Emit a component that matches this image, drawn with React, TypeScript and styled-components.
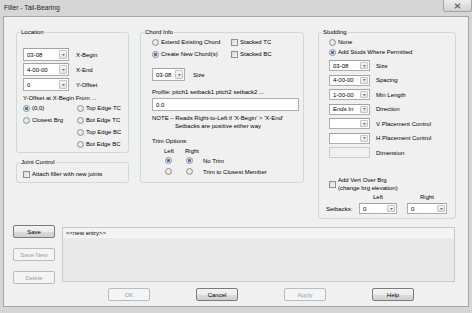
import React from "react";
import styled, { createGlobalStyle } from "styled-components";

const GlobalStyle = createGlobalStyle`
  html, body {
    margin: 0;
    padding: 0;
  }
  body {
    font-family: "Liberation Sans", Arial, sans-serif;
    font-size: 6px;
    color: #000;
    background: #d6d6d6;
  }
`;

const Window = styled.div`
  width: 472px;
  height: 313px;
  box-sizing: border-box;
  display: flex;
  flex-direction: column;
  padding: 0 3px 6px;
  background: #d6d6d6;
  overflow: hidden;
`;

const TitleBar = styled.div`
  height: 16px;
  flex-shrink: 0;
  display: flex;
  justify-content: space-between;
  align-items: flex-start;
`;

const Title = styled.span`
  margin: 4px 0 0 1px;
  font-size: 6.7px;
  line-height: 8px;
  color: #1e1e1e;
`;

const CloseButton = styled.div`
  width: 29px;
  height: 12px;
  margin-right: -3px;
  box-sizing: border-box;
  border: 1px solid #a3a3a3;
  border-top: none;
  border-radius: 0 0 3px 3px;
  background: linear-gradient(#ededed, #d3d3d3);
  display: flex;
  align-items: center;
  justify-content: center;
`;

const Client = styled.div`
  flex: 1;
  border: 1px solid #a6a6a6;
  background: #f0f0f0;
  padding: 15px 0 0 12px;
`;

const TopRow = styled.div`
  display: flex;
  align-items: flex-start;
`;

const LeftColumn = styled.div`
  display: flex;
  flex-direction: column;
  gap: 9px;
  width: 113px;
  flex-shrink: 0;
`;

const GroupFrame = styled.div<{ $w: number; $h: number; $pl: number; $ml: number }>`
  width: ${(p) => p.$w}px;
  height: ${(p) => p.$h}px;
  margin-left: ${(p) => p.$ml}px;
  flex-shrink: 0;
  box-sizing: border-box;
  border: 1px solid #d2d7da;
  border-radius: 3px;
  padding-left: ${(p) => p.$pl}px;
  display: flex;
  flex-direction: column;
  align-items: flex-start;
`;

const Caption = styled.div<{ $shift: number }>`
  margin: -5px 0 0 ${(p) => p.$shift}px;
  padding: 0 1px;
  height: 8px;
  line-height: 8px;
  background: #f0f0f0;
  white-space: nowrap;
`;

const FieldRow = styled.div<{ $mt?: number }>`
  display: flex;
  align-items: center;
  margin-top: ${(p) => p.$mt ?? 0}px;
`;

const FieldLabel = styled.span<{ $ml: number }>`
  margin-left: ${(p) => p.$ml}px;
  line-height: 8px;
  white-space: nowrap;
`;

const Text = styled.div<{ $mt?: number; $lh?: number; $indent?: number }>`
  margin-top: ${(p) => p.$mt ?? 0}px;
  padding-left: ${(p) => p.$indent ?? 0}px;
  line-height: ${(p) => p.$lh ?? 8}px;
  white-space: nowrap;
`;

const OptionGrid = styled.div<{ $cols: string; $row: number; $mt?: number }>`
  display: grid;
  grid-template-columns: ${(p) => p.$cols};
  grid-auto-rows: ${(p) => p.$row}px;
  align-items: center;
  margin-top: ${(p) => p.$mt ?? 0}px;
`;

const Option = styled.div`
  display: flex;
  align-items: center;
  gap: 2px;
  white-space: nowrap;
  line-height: 8px;
`;

const Radio = styled.span<{ $checked?: boolean }>`
  display: inline-block;
  width: 7px;
  height: 7px;
  flex-shrink: 0;
  box-sizing: border-box;
  border-radius: 50%;
  border: 1px solid #8e9092;
  background: ${(p) =>
    p.$checked
      ? "radial-gradient(circle, #2f5f92 0, #4d7cae 1.3px, #e4e4e4 1.9px, #f4f4f4 3px)"
      : "radial-gradient(circle at 40% 40%, #f2f2f2, #d6d6d6)"};
`;

const Check = styled.span`
  display: inline-block;
  width: 7px;
  height: 7px;
  flex-shrink: 0;
  box-sizing: border-box;
  border: 1px solid #8f8f8f;
  background: linear-gradient(135deg, #d9d9d9, #f6f6f6);
`;

const ComboBox = styled.div<{ $w: number; $h: number }>`
  width: ${(p) => p.$w}px;
  height: ${(p) => p.$h}px;
  flex-shrink: 0;
  box-sizing: border-box;
  display: flex;
  align-items: stretch;
  padding: 0 1px 0 3px;
  border: 1px solid #abadb3;
  border-top-color: #9fa2a8;
  background: #fff;
`;

const ComboText = styled.span`
  flex: 1;
  display: flex;
  align-items: center;
  white-space: nowrap;
`;

const DropButton = styled.span`
  width: 8px;
  margin: 1px 0;
  box-sizing: border-box;
  border: 1px solid #c4c4c4;
  border-radius: 1px;
  background: linear-gradient(#f8f8f8, #e2e2e2);
  display: flex;
  align-items: center;
  justify-content: center;
`;

const TextInput = styled.div<{ $w: number; $mt?: number; $disabled?: boolean }>`
  width: ${(p) => p.$w}px;
  height: ${(p) => (p.$disabled ? 11 : 13)}px;
  margin-top: ${(p) => p.$mt ?? 0}px;
  box-sizing: border-box;
  padding-left: 3px;
  display: flex;
  align-items: center;
  border: 1px solid ${(p) => (p.$disabled ? "#cacaca" : "#abadb3")};
  background: ${(p) => (p.$disabled ? "#f0f0f0" : "#fff")};
`;

const TrimGrid = styled.div`
  display: grid;
  grid-template-columns: 12px 21px 18px auto;
  grid-template-rows: 9px 11px 11px;
  align-items: center;
  margin-top: 1px;
  white-space: nowrap;
  line-height: 8px;

  & > ${Radio} {
    margin-left: 1px;
  }
`;

const StudGrid = styled.div`
  display: grid;
  grid-auto-rows: 11px;
  row-gap: 3.5px;
  margin-top: 3px;
`;

const VertOption = styled.div`
  display: flex;
  align-items: center;
  gap: 2px;
  margin-top: 18px;
  line-height: 8px;
  white-space: nowrap;
`;

const SetbackGrid = styled.div`
  display: grid;
  grid-template-columns: 23px 38px 40px;
  grid-template-rows: 8px 11px;
  column-gap: 10px;
  row-gap: 2px;
  margin: 1px 0 0 -3px;
  line-height: 8px;
  white-space: nowrap;
`;

const CenterLabel = styled.span`
  justify-self: center;
`;

const SetbackLabel = styled.span`
  align-self: center;
`;

const BottomArea = styled.div`
  display: flex;
  align-items: flex-start;
  gap: 7px;
  margin: 6px 0 0 -3px;
`;

const SideButtons = styled.div`
  display: flex;
  flex-direction: column;
  gap: 10px;
`;

const ListBox = styled.div`
  width: 393px;
  height: 55px;
  margin-top: 2px;
  box-sizing: border-box;
  border: 1px solid #c8c8c8;
  background: #e9e9e9;
`;

const ListItem = styled.div`
  height: 10px;
  line-height: 10px;
  padding-left: 3px;
  background: #f3f3f3;
`;

const ButtonBar = styled.div`
  display: flex;
  gap: 46px;
  margin: 4px 0 0 92px;
`;

const Button = styled.button`
  width: 42px;
  height: 13px;
  padding: 0;
  box-sizing: border-box;
  font: inherit;
  color: #000;
  border: 1px solid #7b7b7b;
  border-radius: 2px;
  background: linear-gradient(#f3f3f3 0%, #ebebeb 50%, #dddddd 51%, #cfcfcf 100%);

  &:disabled {
    color: #9c9c9c;
    border-color: #b9bcbe;
    background: #f4f4f4;
  }
`;

function Combo({ value = "", w, h = 13 }: { value?: string; w: number; h?: number }) {
  return (
    <ComboBox $w={w} $h={h}>
      <ComboText>{value}</ComboText>
      <DropButton>
        <svg width="3" height="2" viewBox="0 0 3 2">
          <path d="M0 0.2h3L1.5 1.8z" fill="#4a4a4a" />
        </svg>
      </DropButton>
    </ComboBox>
  );
}

function Group({
  title,
  w,
  h,
  pl,
  ml = 0,
  children,
}: {
  title: string;
  w: number;
  h: number;
  pl: number;
  ml?: number;
  children?: React.ReactNode;
}) {
  return (
    <GroupFrame $w={w} $h={h} $pl={pl} $ml={ml}>
      <Caption $shift={3 - pl}>{title}</Caption>
      {children}
    </GroupFrame>
  );
}

const studRows = [
  { value: "03-08", label: "Size" },
  { value: "4-00-00", label: "Spacing" },
  { value: "1-00-00", label: "Min Length" },
  { value: "Ends In", label: "Direction" },
  { value: "", label: "V Placement Control" },
  { value: "", label: "H Placement Control" },
];

export default function App() {
  return (
    <>
      <GlobalStyle />
      <Window>
        <TitleBar>
          <Title>Filler - Tail-Bearing</Title>
          <CloseButton>
            <svg width="7" height="6" viewBox="0 0 7 6">
              <path d="M1 0.8l5 4.4M6 0.8l-5 4.4" stroke="#6a6a6a" strokeWidth="1.4" />
            </svg>
          </CloseButton>
        </TitleBar>

        <Client>
          <TopRow>
            <LeftColumn>
              <Group title="Location" w={113} h={121} pl={6}>
                <FieldRow $mt={12}>
                  <Combo w={46} value="03-08" />
                  <FieldLabel $ml={7}>X-Begin</FieldLabel>
                </FieldRow>
                <FieldRow $mt={2}>
                  <Combo w={46} value="4-00-00" />
                  <FieldLabel $ml={7}>X-End</FieldLabel>
                </FieldRow>
                <FieldRow $mt={2}>
                  <Combo w={46} value="0" />
                  <FieldLabel $ml={7}>Y-Offset</FieldLabel>
                </FieldRow>
                <Text $mt={4} $lh={7}>
                  Y-Offset at X-Begin From ...
                </Text>
                <OptionGrid $cols="54px auto" $row={12}>
                  <Option>
                    <Radio $checked />
                    (0,0)
                  </Option>
                  <Option>
                    <Radio />
                    Top Edge TC
                  </Option>
                  <Option>
                    <Radio />
                    Closest Brg
                  </Option>
                  <Option>
                    <Radio />
                    Bot Edge TC
                  </Option>
                  <span />
                  <Option>
                    <Radio />
                    Top Edge BC
                  </Option>
                  <span />
                  <Option>
                    <Radio />
                    Bot Edge BC
                  </Option>
                </OptionGrid>
              </Group>

              <Group title="Joint Control" w={113} h={21} pl={6}>
                <OptionGrid $cols="auto" $row={10} $mt={3}>
                  <Option>
                    <Check />
                    Attach filler with new joints
                  </Option>
                </OptionGrid>
              </Group>
            </LeftColumn>

            <Group title="Chord Info" w={164} h={151} pl={11} ml={11}>
              <OptionGrid $cols="79px auto" $row={12}>
                <Option>
                  <Radio />
                  Extend Existing Chord
                </Option>
                <Option>
                  <Check />
                  Stacked TC
                </Option>
                <Option>
                  <Radio $checked />
                  Create New Chord(s)
                </Option>
                <Option>
                  <Check />
                  Stacked BC
                </Option>
              </OptionGrid>
              <FieldRow $mt={8}>
                <Combo w={33} value="03-08" />
                <FieldLabel $ml={8}>Size</FieldLabel>
              </FieldRow>
              <Text $mt={7}>Profile: pitch1 setback1 pitch2 setback2 ...</Text>
              <TextInput $w={147} $mt={2}>
                0.0
              </TextInput>
              <Text $mt={3}>NOTE – Reads Right-to-Left if 'X-Begin' &gt; 'X-End'</Text>
              <Text $indent={23}>Setbacks are positive either way</Text>
              <Text $mt={7}>Trim Options:</Text>
              <TrimGrid>
                <span />
                <span>Left</span>
                <span>Right</span>
                <span />
                <span />
                <Radio $checked />
                <Radio $checked />
                <span>No Trim</span>
                <span />
                <Radio />
                <Radio />
                <span>Trim to Closest Member</span>
              </TrimGrid>
            </Group>

            <Group title="Studding" w={138} h={187} pl={10} ml={14}>
              <OptionGrid $cols="auto" $row={10} $mt={1}>
                <Option>
                  <Radio />
                  None
                </Option>
                <Option>
                  <Radio $checked />
                  Add Studs Where Permitted
                </Option>
              </OptionGrid>
              <StudGrid>
                {studRows.map((row) => (
                  <FieldRow key={row.label}>
                    <Combo w={41} h={11} value={row.value} />
                    <FieldLabel $ml={6}>{row.label}</FieldLabel>
                  </FieldRow>
                ))}
                <FieldRow>
                  <TextInput $w={41} $disabled />
                  <FieldLabel $ml={6}>Dimension</FieldLabel>
                </FieldRow>
              </StudGrid>
              <VertOption>
                <Check />
                <div>
                  Add Vert Over Brg
                  <br />
                  (change brg elevation)
                </div>
              </VertOption>
              <SetbackGrid>
                <span />
                <CenterLabel>Left</CenterLabel>
                <CenterLabel>Right</CenterLabel>
                <SetbackLabel>Setbacks:</SetbackLabel>
                <Combo w={38} h={11} value="0" />
                <Combo w={40} h={11} value="0" />
              </SetbackGrid>
            </Group>
          </TopRow>

          <BottomArea>
            <SideButtons>
              <Button>Save</Button>
              <Button disabled>Save New</Button>
              <Button disabled>Delete</Button>
            </SideButtons>
            <ListBox>
              <ListItem>&lt;&lt;new entry&gt;&gt;</ListItem>
            </ListBox>
          </BottomArea>

          <ButtonBar>
            <Button disabled>OK</Button>
            <Button>Cancel</Button>
            <Button disabled>Apply</Button>
            <Button>Help</Button>
          </ButtonBar>
        </Client>
      </Window>
    </>
  );
}
